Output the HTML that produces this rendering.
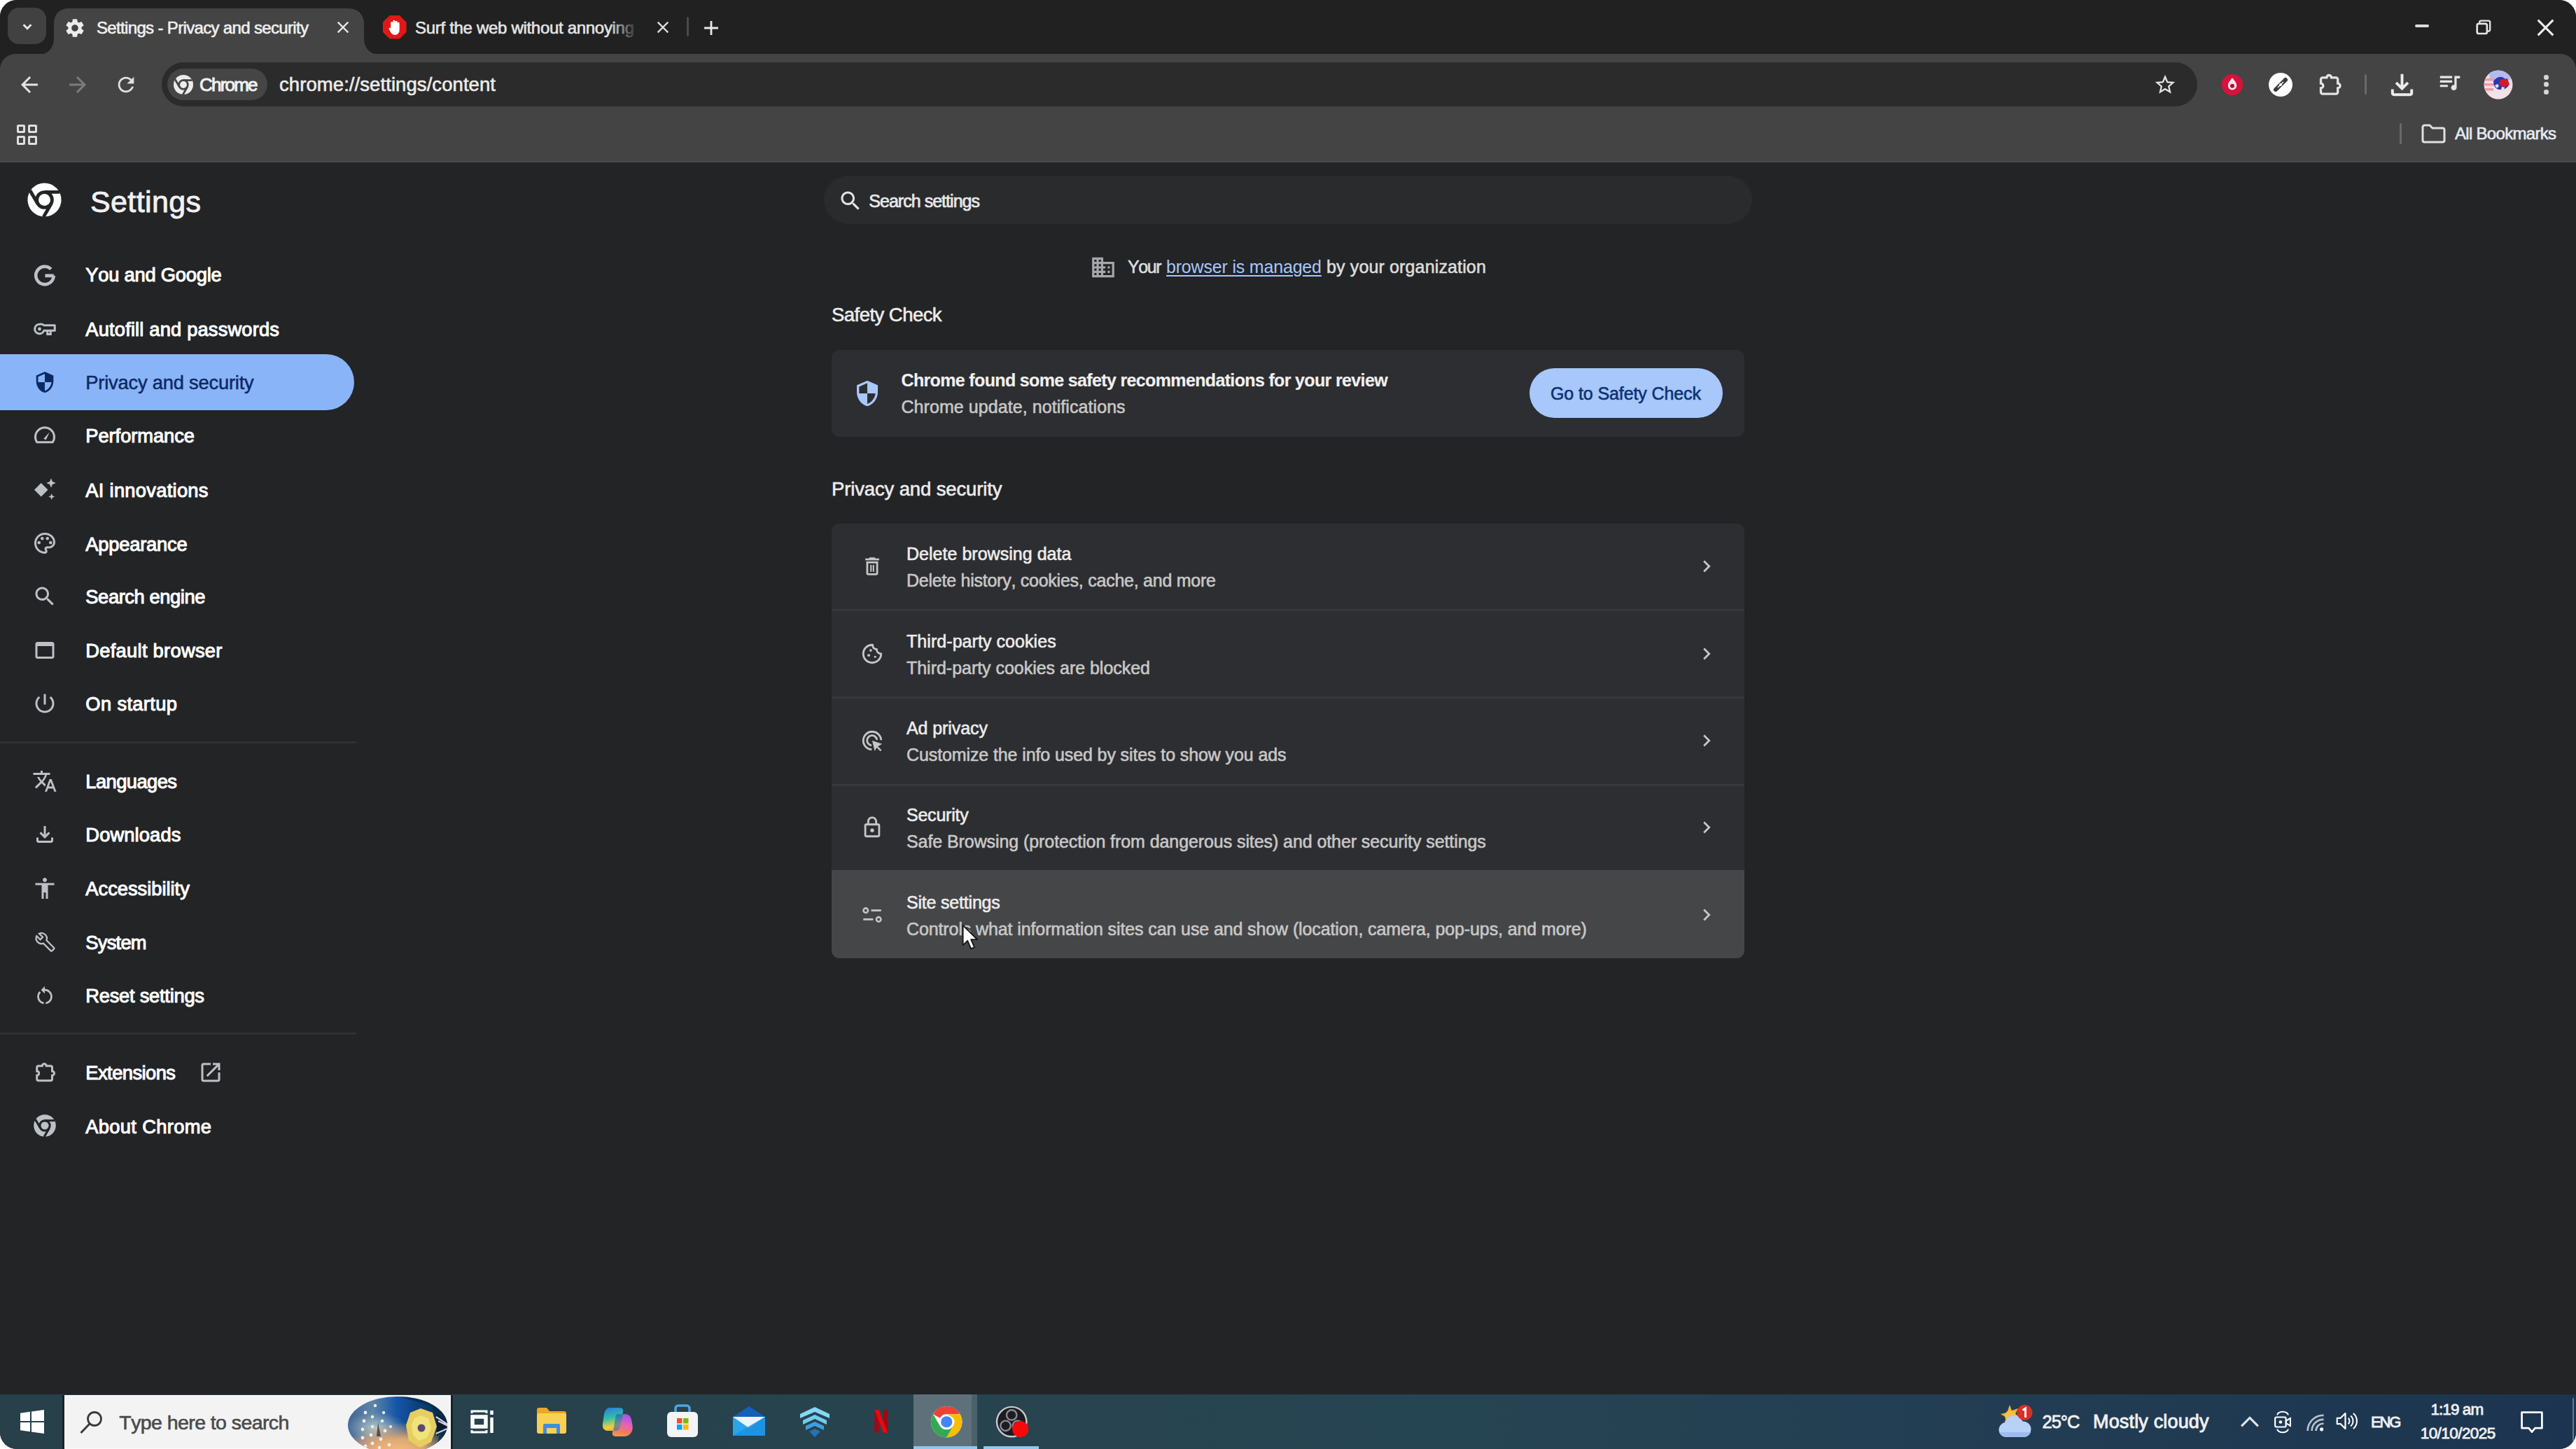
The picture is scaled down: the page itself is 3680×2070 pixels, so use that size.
<!DOCTYPE html>
<html><head><meta charset="utf-8"><title>Settings - Privacy and security</title>
<style>
html,body{margin:0;padding:0;background:#fff;}
body{width:3680px;height:2070px;overflow:hidden;position:relative;font-family:"Liberation Sans",sans-serif;}
#win{position:absolute;left:0;top:0;width:3680px;height:2070px;border-radius:24px;overflow:hidden;background:#222426;}
.b{position:absolute;display:block;}
.t{position:absolute;white-space:nowrap;line-height:1;font-kerning:none;}
</style></head><body><div id="win">
<div class="b" style="left:0px;top:0px;width:3680px;height:110px;background:#212121;border-radius:0;"></div>
<div class="b" style="left:0px;top:77px;width:3680px;height:155px;background:#444444;border-radius:22px 22px 0 0;"></div>
<div class="b" style="left:0px;top:230px;width:3680px;height:2px;background:#4a4b4d;border-radius:0;"></div>
<div class="b" style="left:11px;top:11px;width:55px;height:52px;background:#414141;border-radius:16px;"></div>
<svg class="b" style="left:25.5px;top:25.0px;" width="26" height="26" viewBox="0 0 24 24"><path d="M7 9.5l5 5 5-5" fill="none" stroke="#e8e8e8" stroke-width="2.6"/></svg>
<svg class="b" style="left:53px;top:11.500px" width="492" height="66.500" viewBox="0 0 492 66" preserveAspectRatio="none"><path d="M0 66 C14 66 24 58 24 42 L24 22 C24 8 32 0 46 0 L444 0 C458 0 467 8 467 22 L467 42 C467 58 477 66 492 66 Z" fill="#444444"/></svg>
<svg class="b" style="left:91.0px;top:24.0px;" width="32" height="32" viewBox="0 0 24 24"><path d="M19.14 12.94c.04-.3.06-.61.06-.94 0-.32-.02-.64-.07-.94l2.03-1.58c.18-.14.23-.41.12-.61l-1.92-3.32c-.12-.22-.37-.29-.59-.22l-2.39.96c-.5-.38-1.03-.7-1.62-.94l-.36-2.54c-.04-.24-.24-.41-.48-.41h-3.84c-.24 0-.43.17-.47.41l-.36 2.54c-.59.24-1.13.57-1.62.94l-2.39-.96c-.22-.08-.47 0-.59.22L2.74 8.87c-.12.21-.08.47.12.61l2.03 1.58c-.05.3-.09.63-.09.94s.02.64.07.94l-2.03 1.58c-.18.14-.23.41-.12.61l1.92 3.32c.12.22.37.29.59.22l2.39-.96c.5.38 1.03.7 1.62.94l.36 2.54c.05.24.24.41.48.41h3.84c.24 0 .44-.17.47-.41l.36-2.54c.59-.24 1.13-.56 1.62-.94l2.39.96c.22.08.47 0 .59-.22l1.92-3.32c.12-.22.07-.47-.12-.61l-2.01-1.58zM12 15.6c-1.98 0-3.6-1.62-3.6-3.6s1.62-3.6 3.6-3.6 3.6 1.62 3.6 3.6-1.62 3.6-3.6 3.6z" fill="#ececec"/></svg>
<div class="t " style="left:138.0px;top:27.9px;font-size:24px;font-weight:400;color:#f0f0f0;letter-spacing:-0.660px;-webkit-text-stroke:0.6px;">Settings - Privacy and security</div>
<svg class="b" style="left:476.0px;top:25.0px;" width="28" height="28" viewBox="0 0 24 24"><path d="M19 6.41L17.59 5 12 10.59 6.41 5 5 6.41 10.59 12 5 17.59 6.41 19 12 13.41 17.59 19 19 17.59 13.41 12z" fill="#e6e6e6"/></svg>
<svg class="b" style="left:545.800px;top:21px" width="35.500" height="35.500" viewBox="0 0 38 38"><polygon points="11.5,1 26.5,1 37,11.5 37,26.5 26.5,37 11.5,37 1,26.5 1,11.5" fill="#e21818"/><path d="M13 21 V12.5 a1.7 1.7 0 0 1 3.4 0 V10 a1.7 1.7 0 0 1 3.4 0 V11 a1.7 1.7 0 0 1 3.4 0 V13 a1.6 1.6 0 0 1 3.2 0 V23 c0 5 -3 8 -7 8 c-3.5 0 -5.5 -2 -7.5 -6 l-2 -4 c1 -1.5 2.6 -1.2 3.6 0 Z" fill="#fff"/></svg>
<div class="t " style="left:593.0px;top:27.9px;font-size:24px;font-weight:400;color:#e4e4e4;letter-spacing:-0.305px;-webkit-text-stroke:0.6px;">Surf the web without annoying</div>
<div class="b" style="left:870px;top:20px;width:42px;height:40px;background:linear-gradient(90deg,rgba(33,33,33,0),#212121);border-radius:0;"></div>
<svg class="b" style="left:933.0px;top:25.0px;" width="28" height="28" viewBox="0 0 24 24"><path d="M19 6.41L17.59 5 12 10.59 6.41 5 5 6.41 10.59 12 5 17.59 6.41 19 12 13.41 17.59 19 19 17.59 13.41 12z" fill="#dcdcdc"/></svg>
<div class="b" style="left:981px;top:24px;width:3px;height:28px;background:#4a4a4a;border-radius:2px;"></div>
<svg class="b" style="left:999.0px;top:22.5px;" width="34" height="34" viewBox="0 0 24 24"><path d="M19 13h-6v6h-2v-6H5v-2h6V5h2v6h6v2z" fill="#e8e8e8"/></svg>
<div class="b" style="left:3450px;top:35px;width:20px;height:3.5px;background:#dcdcdc;border-radius:2px;"></div>
<svg class="b" style="left:3535.500px;top:27.500px" width="23.500" height="22" viewBox="0 0 28 28"><path d="M7 7 V4.5 a2.5 2.5 0 0 1 2.5 -2.5 H23.5 a2.500 2.500 0 0 1 2.500 2.500 V18.500 a2.500 2.500 0 0 1 -2.500 2.500 H21" fill="none" stroke="#e4e4e4" stroke-width="3"/><rect x="2.5" y="7.500" width="18" height="18" rx="3" fill="none" stroke="#e4e4e4" stroke-width="3.400"/></svg>
<svg class="b" style="left:3622.5px;top:25.5px;" width="27" height="27" viewBox="0 0 30 30"><path d="M3 3 L27 27 M27 3 L3 27" stroke="#ececec" stroke-width="3.400" fill="none"/></svg>
<svg class="b" style="left:24.0px;top:103.0px;" width="36" height="36" viewBox="0 0 24 24"><path d="M20 11H7.83l5.59-5.59L12 4l-8 8 8 8 1.41-1.410L7.830 13H20v-2z" fill="#e4e4e4"/></svg>
<svg class="b" style="left:92.5px;top:103.0px;" width="36" height="36" viewBox="0 0 24 24"><path d="M12 4l-1.410 1.410L16.170 11H4v2h12.170l-5.580 5.590L12 20l8-8z" fill="#7c7c7c"/></svg>
<svg class="b" style="left:163.0px;top:104.0px;" width="34" height="34" viewBox="0 0 24 24"><path d="M17.650 6.350C16.200 4.900 14.210 4 12 4c-4.420 0-7.990 3.580-7.990 8s3.570 8 7.990 8c3.730 0 6.840-2.550 7.730-6h-2.080c-.82 2.330-3.040 4-5.650 4-3.310 0-6-2.690-6-6s2.690-6 6-6c1.660 0 3.140.690 4.220 1.780L13 11h7V4l-2.350 2.350z" fill="#e0e0e0"/></svg>
<div class="b" style="left:230.5px;top:88.5px;width:2908.5px;height:63.0px;background:#2b2b2b;border-radius:32px;"></div>
<div class="b" style="left:239px;top:98px;width:143px;height:45px;background:#454545;border-radius:23px;"></div>
<svg class="b" style="left:246.0px;top:105.0px;" width="32" height="32" viewBox="0 0 24 24"><circle cx="12" cy="12" r="10.500" fill="#ececec"/><circle cx="12" cy="12" r="5.800" fill="#454545"/><circle cx="12" cy="12" r="3.700" fill="#ececec"/><path d="M12 7.150H21.500 M7.800 14.430L3.050 6.200 M16.200 14.430L11.450 22.650" stroke="#454545" stroke-width="2.100" fill="none"/></svg>
<div class="t " style="left:285.0px;top:107.9px;font-size:26px;font-weight:400;color:#f0f0f0;letter-spacing:-1.797px;-webkit-text-stroke:1.0px;">Chrome</div>
<div class="t " style="left:399.0px;top:107.2px;font-size:27.5px;font-weight:400;color:#ececec;letter-spacing:0.073px;-webkit-text-stroke:0.6px;">chrome://settings/content</div>
<svg class="b" style="left:3076.4px;top:104.0px;" width="34" height="34" viewBox="0 0 24 24"><path d="M22 9.240l-7.190-.62L12 2 9.190 8.630 2 9.240l5.460 4.730L5.820 21 12 17.270 18.180 21l-1.630-7.030L22 9.240zM12 15.400l-3.760 2.270 1-4.280-3.320-2.880 4.380-.38L12 6.100l1.710 4.040 4.380.380-3.320 2.880 1 4.280L12 15.400z" fill="#e6e6e6"/></svg>
<svg class="b" style="left:3173px;top:104.500px" width="32" height="32" viewBox="0 0 36 36"><circle cx="18" cy="18" r="17" fill="#d9113c"/><path d="M18 7 c3 4 7 7.500 7 12.500 a7 7 0 0 1 -14 0 c0-5 4-8.500 7-12.500z" fill="#fbe4ea"/><circle cx="18" cy="20" r="3.300" fill="#b00c30"/></svg>
<svg class="b" style="left:3240px;top:103px" width="36" height="36" viewBox="0 0 36 36"><circle cx="18" cy="18" r="17" fill="#fff"/><path d="M11 25 L25 11" stroke="#3a3a3a" stroke-width="6" stroke-linecap="round"/><path d="M14 22 L22 14" stroke="#fff" stroke-width="1.500"/><circle cx="18" cy="18" r="2" fill="#fff"/></svg>
<svg class="b" style="left:3308.0px;top:99.5px;" width="40" height="40" viewBox="0 0 24 24"><path d="M9.500 6.500 a2 2 0 0 1 4 0 H17.500 a1.500 1.500 0 0 1 1.500 1.500 V11.500 a2 2 0 0 1 0 4 V19 a1.500 1.500 0 0 1 -1.500 1.500 H6 a1.500 1.500 0 0 1 -1.500 -1.500 V15.500 a2 2 0 0 0 0 -4 V8 A1.500 1.500 0 0 1 6 6.500 Z" fill="none" stroke="#e4e4e4" stroke-width="2"/></svg>
<div class="b" style="left:3377.5px;top:106px;width:3.0px;height:29px;background:#6a6a6a;border-radius:2px;"></div>
<svg class="b" style="left:3407.5px;top:97.5px;" width="47" height="47" viewBox="0 0 24 24"><path d="M12 16l-5-5 1.400-1.450 2.600 2.600V4h2v8.150l2.600-2.600L17 11l-5 5zm-6 4c-.55 0-1.020-.2-1.410-.59C4.200 19.020 4 18.550 4 18v-3h2v3h12v-3h2v3c0 .55-.2 1.020-.59 1.410-.39.390-.86.590-1.410.590H6z" fill="#ececec"/></svg>
<svg class="b" style="left:3480.6px;top:99.0px;" width="38" height="38" viewBox="0 0 24 24"><path d="M3 6h11v2H3z M3 10h11v2H3z M3 14h7v2H3z" fill="#e6e6e6"/><path d="M16 6 h5 v2.200 h-3 V16.500 a2.500 2.500 0 1 1 -2 -2.450 Z" fill="#e6e6e6"/></svg>
<svg class="b" style="left:3547.700px;top:100px" width="42" height="42" viewBox="0 0 42 42"><defs><clipPath id="av"><circle cx="21" cy="21" r="20.500"/></clipPath></defs><g clip-path="url(#av)"><rect width="42" height="42" fill="#f1dfe4"/><ellipse cx="24" cy="8" rx="16" ry="11" fill="#b4bcee"/><path d="M0 12 h16 v3.500 h-16z M0 19 h15 v3.500 h-15z M0 26 h14 v3.500 h-14z" fill="#ee9aa6"/><path d="M14 16 q8 -10 16 -4 l6 10 q-6 8 -14 6 q-8 -2 -8 -12z" fill="#2b38b2"/><path d="M24 14 l10 -2 3 9 -8 4 -7 -5z" fill="#d21a2c"/><path d="M16 22 l4 -2 2 3 -3 3z M26 24 l4 1 -1 4 -4 -1z" fill="#e8e0f4"/><ellipse cx="24" cy="36" rx="16" ry="8" fill="#f3e3e6"/></g></svg>
<div class="b" style="left:3634.200px;top:107.25px;width:6.500px;height:6.500px;border-radius:50%;background:#d6d6d6"></div>
<div class="b" style="left:3634.200px;top:117.25px;width:6.500px;height:6.500px;border-radius:50%;background:#d6d6d6"></div>
<div class="b" style="left:3634.200px;top:128.25px;width:6.500px;height:6.500px;border-radius:50%;background:#d6d6d6"></div>
<div class="b" style="left:23.5px;top:177.5px;width:12.500px;height:12.500px;box-sizing:border-box;border:3px solid #dedede;border-radius:2px"></div>
<div class="b" style="left:40px;top:177.5px;width:12.500px;height:12.500px;box-sizing:border-box;border:3px solid #dedede;border-radius:2px"></div>
<div class="b" style="left:23.5px;top:194px;width:12.500px;height:12.500px;box-sizing:border-box;border:3px solid #dedede;border-radius:2px"></div>
<div class="b" style="left:40px;top:194px;width:12.500px;height:12.500px;box-sizing:border-box;border:3px solid #dedede;border-radius:2px"></div>
<div class="b" style="left:3427.5px;top:176px;width:3.0px;height:30px;background:#6a6a6a;border-radius:2px;"></div>
<svg class="b" style="left:3458px;top:176px" width="37" height="30" viewBox="0 0 37 30"><path d="M3 5.500 a2.500 2.500 0 0 1 2.500 -2.500 H13 l4 4 H31.500 a2.500 2.500 0 0 1 2.500 2.500 V24.500 a2.500 2.500 0 0 1 -2.500 2.500 H5.500 a2.500 2.500 0 0 1 -2.500 -2.500 Z" fill="none" stroke="#e0e0e0" stroke-width="3"/></svg>
<div class="t " style="left:3507.0px;top:179.4px;font-size:24px;font-weight:400;color:#e6ebf5;letter-spacing:-0.698px;-webkit-text-stroke:0.6px;">All Bookmarks</div>
<svg class="b" style="left:35.9px;top:258.0px;" width="55" height="55" viewBox="0 0 24 24"><circle cx="12" cy="12" r="10.500" fill="#ffffff"/><circle cx="12" cy="12" r="5.800" fill="#222426"/><circle cx="12" cy="12" r="3.700" fill="#ffffff"/><path d="M12 7.150H21.500 M7.800 14.430L3.050 6.200 M16.200 14.430L11.450 22.650" stroke="#222426" stroke-width="2.100" fill="none"/></svg>
<div class="t " style="left:129.0px;top:266.9px;font-size:43px;font-weight:400;color:#f1f1f1;letter-spacing:0.375px;-webkit-text-stroke:0.9px;">Settings</div>
<div class="b" style="left:0px;top:506px;width:506px;height:80px;background:#8ab4f8;border-radius:0 40px 40px 0;"></div>
<div class="t " style="left:122.3px;top:379.3px;font-size:27.3px;font-weight:400;color:#ffffff;letter-spacing:-0.216px;-webkit-text-stroke:1.05px;">You and Google</div>
<svg class="b" style="left:45.7px;top:374.0px;" width="36" height="36" viewBox="0 0 24 24"><path d="M20.500 12.200 H12.300 M20.500 12.200 A8.500 8.500 0 1 1 17.900 5.900" fill="none" stroke="#bdc1c6" stroke-width="3.100" transform="translate(0 1)"/></svg>
<div class="t " style="left:122.3px;top:457.0px;font-size:27.3px;font-weight:400;color:#ffffff;letter-spacing:0.170px;-webkit-text-stroke:1.05px;">Autofill and passwords</div>
<svg class="b" style="left:45.7px;top:451.7px;" width="36" height="36" viewBox="0 0 24 24"><path d="M7 8.500 a4.500 4.500 0 1 0 4.200 6 H21.500 V9.500 H11.200 A4.500 4.500 0 0 0 7 8.500 Z" fill="none" stroke="#bdc1c6" stroke-width="2" stroke-linejoin="round" transform="translate(0 -1)"/><circle cx="7" cy="12" r="1.600" fill="#bdc1c6"/><path d="M17.500 13.500 v3.500 h-3 v-3.500" fill="none" stroke="#bdc1c6" stroke-width="2"/></svg>
<div class="t " style="left:122.3px;top:533.1px;font-size:27.3px;font-weight:400;color:#0b2a63;letter-spacing:-0.203px;-webkit-text-stroke:0.5px;">Privacy and security</div>
<svg class="b" style="left:45.7px;top:527.8px;" width="36" height="36" viewBox="0 0 24 24"><path d="M12 1L3 5v6c0 5.550 3.840 10.740 9 12 5.160-1.260 9-6.450 9-12V5l-9-4zm0 10.990h7c-.53 4.120-3.280 7.790-7 8.940V12H5V6.300l7-3.110v8.800z" fill="#0b2a63" transform="translate(1.100 1.100) scale(0.910)"/></svg>
<div class="t " style="left:122.3px;top:609.2px;font-size:27.3px;font-weight:400;color:#ffffff;letter-spacing:-0.057px;-webkit-text-stroke:1.05px;">Performance</div>
<svg class="b" style="left:45.7px;top:603.9px;" width="36" height="36" viewBox="0 0 24 24"><path d="M4.500 18.500 A9 9 0 1 1 19.500 18.500 Z" fill="none" stroke="#bdc1c6" stroke-width="2" stroke-linejoin="round"/><path d="M10.800 15.200 L16.500 9 L13.200 16.200 Z" fill="#bdc1c6"/></svg>
<div class="t " style="left:122.3px;top:686.7px;font-size:27.3px;font-weight:400;color:#ffffff;letter-spacing:0.286px;-webkit-text-stroke:1.05px;">AI innovations</div>
<svg class="b" style="left:45.7px;top:681.4px;" width="36" height="36" viewBox="0 0 24 24"><path d="M8.500 6 L15 12.500 L8.500 19 L2 12.500 Z" fill="#bdc1c6"/><path d="M18 1.500 l1.300 3.200 3.200 1.300 -3.200 1.300 -1.300 3.200 -1.300 -3.200 -3.200 -1.300 3.200 -1.300z M18.500 16 l.9 2.100 2.100.9 -2.100.9 -.9 2.100 -.9 -2.100 -2.100 -.9 2.100 -.9z" fill="#bdc1c6"/></svg>
<div class="t " style="left:122.3px;top:763.7px;font-size:27.3px;font-weight:400;color:#ffffff;letter-spacing:-0.202px;-webkit-text-stroke:1.05px;">Appearance</div>
<svg class="b" style="left:45.7px;top:758.4px;" width="36" height="36" viewBox="0 0 24 24"><path d="M12 22C6.490 22 2 17.510 2 12S6.490 2 12 2s10 4.040 10 9c0 3.310-2.690 6-6 6h-1.770c-.28 0-.5.220-.5.500 0 .12.050.23.130.33.410.47.640 1.060.640 1.670A2.500 2.500 0 0 1 12 22zm0-18c-4.410 0-8 3.590-8 8s3.590 8 8 8c.28 0 .5-.22.5-.5a.54.540 0 0 0-.14-.35c-.41-.46-.63-1.050-.63-1.650a2.500 2.500 0 0 1 2.500-2.500H16c2.210 0 4-1.790 4-4 0-3.860-3.590-7-8-7z" fill="#bdc1c6"/><circle cx="6.500" cy="11.500" r="1.500" fill="#bdc1c6"/><circle cx="9.500" cy="7.500" r="1.500" fill="#bdc1c6"/><circle cx="14.500" cy="7.500" r="1.500" fill="#bdc1c6"/><circle cx="17.500" cy="11.500" r="1.500" fill="#bdc1c6"/></svg>
<div class="t " style="left:122.3px;top:839.3px;font-size:27.3px;font-weight:400;color:#ffffff;letter-spacing:-0.404px;-webkit-text-stroke:1.05px;">Search engine</div>
<svg class="b" style="left:45.7px;top:834.0px;" width="36" height="36" viewBox="0 0 24 24"><path d="M15.500 14h-.79l-.28-.27C15.410 12.590 16 11.110 16 9.500 16 5.910 13.090 3 9.500 3S3 5.910 3 9.500 5.910 16 9.500 16c1.610 0 3.090-.59 4.230-1.570l.27.280v.790l5 4.990L20.490 19l-4.990-5zm-6 0C7.010 14 5 11.990 5 9.500S7.010 5 9.500 5 14 7.010 14 9.500 11.990 14 9.500 14z" fill="#bdc1c6"/></svg>
<div class="t " style="left:122.3px;top:916.3px;font-size:27.3px;font-weight:400;color:#ffffff;letter-spacing:0.281px;-webkit-text-stroke:1.05px;">Default browser</div>
<svg class="b" style="left:45.7px;top:911.0px;" width="36" height="36" viewBox="0 0 24 24"><path d="M19 4H5c-1.110 0-2 .9-2 2v12c0 1.100.89 2 2 2h14c1.100 0 2-.9 2-2V6c0-1.100-.89-2-2-2zm0 14H5V8h14v10z" fill="#bdc1c6"/></svg>
<div class="t " style="left:122.3px;top:992.3px;font-size:27.3px;font-weight:400;color:#ffffff;letter-spacing:0.361px;-webkit-text-stroke:1.05px;">On startup</div>
<svg class="b" style="left:45.7px;top:987.0px;" width="36" height="36" viewBox="0 0 24 24"><path d="M13 3h-2v10h2V3zm4.830 2.170l-1.420 1.420C17.990 7.860 19 9.810 19 12c0 3.870-3.130 7-7 7s-7-3.130-7-7c0-2.190 1.010-4.140 2.580-5.420L6.170 5.170C4.230 6.820 3 9.260 3 12c0 4.970 4.030 9 9 9s9-4.030 9-9c0-2.740-1.230-5.180-3.170-6.830z" fill="#bdc1c6"/></svg>
<div class="t " style="left:122.3px;top:1103.1px;font-size:27.3px;font-weight:400;color:#ffffff;letter-spacing:-0.551px;-webkit-text-stroke:1.05px;">Languages</div>
<svg class="b" style="left:45.7px;top:1097.8px;" width="36" height="36" viewBox="0 0 24 24"><path d="M12.870 15.070l-2.540-2.510.03-.03c1.740-1.940 2.980-4.170 3.710-6.530H17V4h-7V2H8v2H1v1.990h11.170C11.500 7.920 10.440 9.750 9 11.350 8.070 10.320 7.300 9.190 6.690 8h-2c.73 1.630 1.730 3.170 2.980 4.560l-5.090 5.020L4 19l5-5 3.110 3.110.76-2.040zM18.500 10h-2L12 22h2l1.120-3h4.750L21 22h2l-4.500-12zm-2.620 7l1.620-4.330L19.120 17h-3.240z" fill="#bdc1c6"/></svg>
<div class="t " style="left:122.3px;top:1179.2px;font-size:27.3px;font-weight:400;color:#ffffff;letter-spacing:0.132px;-webkit-text-stroke:1.05px;">Downloads</div>
<svg class="b" style="left:45.7px;top:1173.9px;" width="36" height="36" viewBox="0 0 24 24"><path d="M12 16l-5-5 1.400-1.450 2.600 2.600V4h2v8.150l2.600-2.600L17 11l-5 5zm-6 4c-.55 0-1.020-.2-1.410-.59C4.200 19.020 4 18.550 4 18v-3h2v3h12v-3h2v3c0 .55-.2 1.020-.59 1.410-.39.390-.86.590-1.410.590H6z" fill="#bdc1c6"/></svg>
<div class="t " style="left:122.3px;top:1256.2px;font-size:27.3px;font-weight:400;color:#ffffff;letter-spacing:-0.013px;-webkit-text-stroke:1.05px;">Accessibility</div>
<svg class="b" style="left:45.7px;top:1250.9px;" width="36" height="36" viewBox="0 0 24 24"><path d="M12 2c1.100 0 2 .9 2 2s-.9 2-2 2-2-.9-2-2 .9-2 2-2zm9 7h-6v13h-2v-6h-2v6H9V9H3V7h18v2z" fill="#bdc1c6"/></svg>
<div class="t " style="left:122.3px;top:1332.9px;font-size:27.3px;font-weight:400;color:#ffffff;letter-spacing:-0.743px;-webkit-text-stroke:1.05px;">System</div>
<svg class="b" style="left:45.7px;top:1327.6px;" width="36" height="36" viewBox="0 0 24 24"><path d="M22.700 19l-9.100-9.100c.9-2.300.4-5-1.500-6.900-2-2-5-2.400-7.400-1.300L9 6 6 9 1.600 4.700C.4 7.100.9 10.100 2.900 12.100c1.900 1.900 4.600 2.400 6.900 1.500l9.100 9.100c.4.400 1 .400 1.400 0l2.300-2.300c.5-.4.5-1.100.1-1.400z" fill="none" stroke="#bdc1c6" stroke-width="2" transform="translate(3 2.500) scale(0.780)"/></svg>
<div class="t " style="left:122.3px;top:1409.0px;font-size:27.3px;font-weight:400;color:#ffffff;letter-spacing:-0.251px;-webkit-text-stroke:1.05px;">Reset settings</div>
<svg class="b" style="left:45.7px;top:1403.7px;" width="36" height="36" viewBox="0 0 24 24"><path d="M12 5V2L8 6l4 4V7c3.310 0 6 2.690 6 6 0 2.970-2.170 5.430-5 5.910v2.020c3.950-.49 7-3.850 7-7.930 0-4.420-3.580-8-8-8zM6 13c0-1.650.67-3.150 1.760-4.240L6.340 7.340C4.900 8.790 4 10.790 4 13c0 4.080 3.050 7.440 7 7.930v-2.020c-2.830-.48-5-2.940-5-5.910z" fill="#bdc1c6" transform="translate(1.200 1.400) scale(0.900)"/></svg>
<div class="t " style="left:122.3px;top:1518.5px;font-size:27.3px;font-weight:400;color:#ffffff;letter-spacing:-0.537px;-webkit-text-stroke:1.05px;">Extensions</div>
<svg class="b" style="left:45.7px;top:1513.2px;" width="36" height="36" viewBox="0 0 24 24"><path d="M9.500 6.500 a2 2 0 0 1 4 0 H17.500 a1.500 1.500 0 0 1 1.500 1.500 V11.500 a2 2 0 0 1 0 4 V19 a1.500 1.500 0 0 1 -1.500 1.500 H6 a1.500 1.500 0 0 1 -1.500 -1.500 V15.500 a2 2 0 0 0 0 -4 V8 A1.500 1.500 0 0 1 6 6.500 Z" fill="none" stroke="#bdc1c6" stroke-width="2"/></svg>
<div class="t " style="left:122.3px;top:1595.6px;font-size:27.3px;font-weight:400;color:#ffffff;letter-spacing:0.326px;-webkit-text-stroke:1.05px;">About Chrome</div>
<svg class="b" style="left:45.7px;top:1590.3px;" width="36" height="36" viewBox="0 0 24 24"><circle cx="12" cy="12" r="10.500" fill="#bdc1c6"/><circle cx="12" cy="12" r="5.800" fill="#222426"/><circle cx="12" cy="12" r="3.700" fill="#bdc1c6"/><path d="M12 7.150H21.500 M7.800 14.430L3.050 6.200 M16.200 14.430L11.450 22.650" stroke="#222426" stroke-width="2.100" fill="none"/></svg>
<div class="b" style="left:0px;top:1059px;width:509px;height:3px;background:#303134;border-radius:0;"></div>
<div class="b" style="left:0px;top:1475px;width:509px;height:3px;background:#303134;border-radius:0;"></div>
<svg class="b" style="left:283.2px;top:1513.5px;" width="36" height="36" viewBox="0 0 24 24"><path d="M19 19H5V5h7V3H5c-1.110 0-2 .9-2 2v14c0 1.100.89 2 2 2h14c1.100 0 2-.9 2-2v-7h-2v7zM14 3v2h3.590l-9.830 9.830 1.410 1.410L19 6.410V10h2V3h-7z" fill="#bdc1c6"/></svg>
<div class="b" style="left:1177px;top:251px;width:1326px;height:69px;background:#2a2b2d;border-radius:35px;"></div>
<svg class="b" style="left:1196.5px;top:268.5px;" width="36" height="36" viewBox="0 0 24 24"><path d="M15.500 14h-.79l-.28-.27C15.410 12.590 16 11.110 16 9.500 16 5.910 13.090 3 9.500 3S3 5.910 3 9.500 5.910 16 9.500 16c1.610 0 3.090-.59 4.230-1.570l.27.280v.790l5 4.990L20.490 19l-4.990-5zm-6 0C7.010 14 5 11.990 5 9.500S7.010 5 9.500 5 14 7.010 14 9.500 11.990 14 9.500 14z" fill="#e3e3e3"/></svg>
<div class="t " style="left:1241.3px;top:274.9px;font-size:25px;font-weight:400;color:#e8e8e8;letter-spacing:-0.973px;-webkit-text-stroke:0.7px;">Search settings</div>
<svg class="b" style="left:1557.0px;top:362.5px;" width="38" height="38" viewBox="0 0 24 24"><path d="M12 7V3H2v18h20V7H12zM6 19H4v-2h2v2zm0-4H4v-2h2v2zm0-4H4V9h2v2zm0-4H4V5h2v2zm4 12H8v-2h2v2zm0-4H8v-2h2v2zm0-4H8V9h2v2zm0-4H8V5h2v2zm10 12h-8v-2h2v-2h-2v-2h2v-2h-2V9h8v10zm-2-8h-2v2h2v-2zm0 4h-2v2h2v-2z" fill="#a6a8ab"/></svg>
<div class="t " style="left:1610.9px;top:369.4px;font-size:25px;font-weight:400;color:#dcdcdc;letter-spacing:-1.404px;-webkit-text-stroke:0.6px;">Your</div>
<div class="t " style="left:1666.0px;top:369.4px;font-size:25px;font-weight:400;color:#a8c7fa;letter-spacing:-0.184px;text-decoration:underline;text-underline-offset:3px;text-decoration-thickness:2px-webkit-text-stroke:0.6px;">browser is managed</div>
<div class="t " style="left:1895.0px;top:369.4px;font-size:25px;font-weight:400;color:#dcdcdc;letter-spacing:0.140px;-webkit-text-stroke:0.6px;">by your organization</div>
<div class="t " style="left:1188.0px;top:436.2px;font-size:27.5px;font-weight:400;color:#ececec;letter-spacing:-0.542px;-webkit-text-stroke:0.6px;">Safety Check</div>
<div class="b" style="left:1188px;top:500px;width:1304px;height:124px;background:#2d2e31;border-radius:11px;"></div>
<svg class="b" style="left:1218.5px;top:541.5px;" width="40" height="40" viewBox="0 0 24 24"><path d="M12 1L3 5v6c0 5.550 3.840 10.740 9 12 5.160-1.260 9-6.450 9-12V5l-9-4zm0 10.990h7c-.53 4.120-3.280 7.790-7 8.940V12H5V6.300l7-3.110v8.800z" fill="#a8c7fa"/></svg>
<div class="t " style="left:1287.5px;top:531.0px;font-size:25px;font-weight:700;color:#f0f0f0;letter-spacing:-0.648px;-webkit-text-stroke:0.2px;">Chrome found some safety recommendations for your review</div>
<div class="t " style="left:1287.5px;top:569.4px;font-size:25px;font-weight:400;color:#c7c7c7;letter-spacing:0.069px;-webkit-text-stroke:0.6px;">Chrome update, notifications</div>
<div class="b" style="left:2185px;top:526px;width:276px;height:71px;background:#a8c7fa;border-radius:36px;"></div>
<div class="t " style="left:2215.0px;top:550.0px;font-size:25px;font-weight:400;color:#0b3275;letter-spacing:-0.105px;-webkit-text-stroke:0.6px;">Go to Safety Check</div>
<div class="t " style="left:1188.0px;top:685.2px;font-size:27.5px;font-weight:400;color:#ececec;letter-spacing:-0.136px;-webkit-text-stroke:0.6px;">Privacy and security</div>
<div class="b" style="left:1188px;top:748px;width:1304px;height:621px;background:#2d2e31;border-radius:11px;overflow:hidden"></div>
<div class="b" style="left:1188px;top:1243px;width:1304px;height:126px;background:#454648;border-radius:0 0 11px 11px;"></div>
<div class="b" style="left:1188px;top:870px;width:1304px;height:3px;background:#37383b;border-radius:0;"></div>
<div class="b" style="left:1188px;top:995px;width:1304px;height:3px;background:#37383b;border-radius:0;"></div>
<div class="b" style="left:1188px;top:1120px;width:1304px;height:3px;background:#37383b;border-radius:0;"></div>
<div class="t " style="left:1295.0px;top:778.7px;font-size:25px;font-weight:400;color:#ececec;letter-spacing:0.028px;-webkit-text-stroke:0.6px;">Delete browsing data</div>
<div class="t " style="left:1295.0px;top:816.7px;font-size:25px;font-weight:400;color:#c7c7c7;letter-spacing:-0.247px;-webkit-text-stroke:0.6px;">Delete history, cookies, cache, and more</div>
<svg class="b" style="left:1229.0px;top:791.8px;" width="34" height="34" viewBox="0 0 24 24"><path d="M16 9v10H8V9h8m-1.500-6h-5l-1 1H5v2h14V4h-3.500l-1-1zM18 7H6v12c0 1.100.9 2 2 2h8c1.100 0 2-.9 2-2V7z" fill="#c4c7c5"/><path d="M10 10.500h1.500v7H10z M12.500 10.500H14v7h-1.500z" fill="#c4c7c5"/></svg>
<svg class="b" style="left:2421.0px;top:791.8px;" width="34" height="34" viewBox="0 0 24 24"><path d="M10 6L8.590 7.410 13.170 12l-4.580 4.590L10 18l6-6z" fill="#c4c7c5"/></svg>
<div class="t " style="left:1295.0px;top:903.7px;font-size:25px;font-weight:400;color:#ececec;letter-spacing:0.062px;-webkit-text-stroke:0.6px;">Third-party cookies</div>
<div class="t " style="left:1295.0px;top:941.7px;font-size:25px;font-weight:400;color:#c7c7c7;letter-spacing:-0.026px;-webkit-text-stroke:0.6px;">Third-party cookies are blocked</div>
<svg class="b" style="left:1229.0px;top:916.8px;" width="34" height="34" viewBox="0 0 24 24"><path d="M21 12 a9 9 0 1 1 -8.500 -9 c-.3 2.500 1.500 4.500 4 4.300 c-.2 2.700 1.800 4.700 4.500 4.700z" fill="none" stroke="#c4c7c5" stroke-width="2" stroke-linejoin="round"/><circle cx="8.500" cy="13.500" r="1.400" fill="#c4c7c5"/><circle cx="10.500" cy="8.500" r="1.300" fill="#c4c7c5"/><circle cx="15" cy="15" r="1.100" fill="#c4c7c5"/></svg>
<svg class="b" style="left:2421.0px;top:916.8px;" width="34" height="34" viewBox="0 0 24 24"><path d="M10 6L8.590 7.410 13.170 12l-4.580 4.590L10 18l6-6z" fill="#c4c7c5"/></svg>
<div class="t " style="left:1295.0px;top:1028.3px;font-size:25px;font-weight:400;color:#ececec;letter-spacing:-0.091px;-webkit-text-stroke:0.6px;">Ad privacy</div>
<div class="t " style="left:1295.0px;top:1066.3px;font-size:25px;font-weight:400;color:#c7c7c7;letter-spacing:-0.107px;-webkit-text-stroke:0.6px;">Customize the info used by sites to show you ads</div>
<svg class="b" style="left:1229.0px;top:1041.4px;" width="34" height="34" viewBox="0 0 24 24"><path d="M11.500 21 A9 9 0 1 1 21 11.500" fill="none" stroke="#c4c7c5" stroke-width="2"/><path d="M11.300 16.800 A5 5 0 1 1 16.800 11.300" fill="none" stroke="#c4c7c5" stroke-width="2"/><path d="M12 12 L22 15.300 L17.800 17.800 L21.500 21.500 L20.200 22.800 L16.500 19.100 L14.500 22.500 Z" fill="#c4c7c5"/></svg>
<svg class="b" style="left:2421.0px;top:1041.4px;" width="34" height="34" viewBox="0 0 24 24"><path d="M10 6L8.590 7.410 13.170 12l-4.580 4.590L10 18l6-6z" fill="#c4c7c5"/></svg>
<div class="t " style="left:1295.0px;top:1152.2px;font-size:25px;font-weight:400;color:#ececec;letter-spacing:-0.230px;-webkit-text-stroke:0.6px;">Security</div>
<div class="t " style="left:1295.0px;top:1190.2px;font-size:25px;font-weight:400;color:#c7c7c7;letter-spacing:-0.080px;-webkit-text-stroke:0.6px;">Safe Browsing (protection from dangerous sites) and other security settings</div>
<svg class="b" style="left:1229.0px;top:1165.3px;" width="34" height="34" viewBox="0 0 24 24"><path d="M18 8h-1V6c0-2.760-2.240-5-5-5S7 3.240 7 6v2H6c-1.100 0-2 .9-2 2v10c0 1.100.9 2 2 2h12c1.100 0 2-.9 2-2V10c0-1.100-.9-2-2-2zM9 6c0-1.660 1.340-3 3-3s3 1.340 3 3v2H9V6zm9 14H6V10h12v10zm-6-3c1.100 0 2-.9 2-2s-.9-2-2-2-2 .9-2 2 .9 2 2 2z" fill="#c4c7c5"/></svg>
<svg class="b" style="left:2421.0px;top:1165.3px;" width="34" height="34" viewBox="0 0 24 24"><path d="M10 6L8.590 7.410 13.170 12l-4.580 4.590L10 18l6-6z" fill="#c4c7c5"/></svg>
<div class="t " style="left:1295.0px;top:1277.2px;font-size:25px;font-weight:400;color:#ececec;letter-spacing:-0.199px;-webkit-text-stroke:0.6px;">Site settings</div>
<div class="t " style="left:1295.0px;top:1315.2px;font-size:25px;font-weight:400;color:#c7c7c7;letter-spacing:-0.109px;-webkit-text-stroke:0.6px;">Controls what information sites can use and show (location, camera, pop-ups, and more)</div>
<svg class="b" style="left:1229.0px;top:1290.3px;" width="34" height="34" viewBox="0 0 24 24"><circle cx="5.500" cy="7.500" r="2.300" fill="none" stroke="#c4c7c5" stroke-width="1.800"/><path d="M11 7.500H21" stroke="#c4c7c5" stroke-width="2"/><circle cx="18.500" cy="16.500" r="2.300" fill="none" stroke="#c4c7c5" stroke-width="1.800"/><path d="M3 16.500H13" stroke="#c4c7c5" stroke-width="2"/></svg>
<svg class="b" style="left:2421.0px;top:1290.3px;" width="34" height="34" viewBox="0 0 24 24"><path d="M10 6L8.590 7.410 13.170 12l-4.580 4.590L10 18l6-6z" fill="#c4c7c5"/></svg>
<svg class="b" style="left:1372.500px;top:1319.500px" width="26.500" height="39" viewBox="0 0 30 44"><path d="M3 2 L3 34 L10.500 27 L16 40 L21.500 37.500 L16 25 L26 25 Z" fill="#fff" stroke="#111" stroke-width="2" stroke-linejoin="round"/></svg>
<div class="b" style="left:0px;top:1992px;width:3680px;height:78px;background:linear-gradient(90deg,#27404a 0%,#27434e 35%,#264552 55%,#223d53 78%,#1c3450 100%);border-radius:0;"></div>
<svg class="b" style="left:29px;top:2014px" width="34" height="34" viewBox="0 0 34 34"><path d="M0 4.700 L14 2.800 V16 H0Z M16 2.500 L34 0 V16 H16Z M0 18 H14 V31.200 L0 29.300Z M16 18 H34 V34 L16 31.500Z" fill="#fff"/></svg>
<div class="b" style="left:89px;top:1993px;width:557.5px;height:77px;background:#16242b;border-radius:0;"></div>
<div class="b" style="left:91.5px;top:1993px;width:552.5px;height:77px;background:#f3f3f3;border-radius:0;border:2px solid #f8f8f8;box-sizing:border-box"></div>
<svg class="b" style="left:113px;top:2014px" width="36" height="36" viewBox="0 0 36 36"><circle cx="22" cy="13" r="9.500" fill="none" stroke="#3a3a3a" stroke-width="2.800"/><path d="M15 20 L2.500 33" stroke="#3a3a3a" stroke-width="3"/></svg>
<div class="t " style="left:170.3px;top:2017.7px;font-size:28.5px;font-weight:400;color:#4a4a4a;letter-spacing:-0.576px;-webkit-text-stroke:0.6px;">Type here to search</div>
<svg class="b" style="left:496px;top:1994px" width="146" height="76" viewBox="0 0 146 76"><defs><linearGradient id="sg1" x1="0" y1="0" x2="1" y2="0"><stop offset="0" stop-color="#3f6496"/><stop offset="0.250" stop-color="#5e85a8"/><stop offset="0.480" stop-color="#1556a8"/><stop offset="0.700" stop-color="#0c3f7c"/><stop offset="1" stop-color="#052a40"/></linearGradient><radialGradient id="sg2" cx="0.520" cy="1.050" r="0.550"><stop offset="0" stop-color="#f6bd76"/><stop offset="0.450" stop-color="#f0b070" stop-opacity="0.900"/><stop offset="1" stop-color="#f0b070" stop-opacity="0"/></radialGradient><radialGradient id="sg3" cx="0.280" cy="0.600" r="0.300"><stop offset="0" stop-color="#c9d4cc" stop-opacity="0.850"/><stop offset="1" stop-color="#9fb4c0" stop-opacity="0"/></radialGradient><radialGradient id="sg4" cx="0.250" cy="1.050" r="0.350"><stop offset="0" stop-color="#c48a8a"/><stop offset="1" stop-color="#c48a8a" stop-opacity="0"/></radialGradient><clipPath id="sgc"><ellipse cx="72" cy="42" rx="71" ry="41"/></clipPath></defs><g clip-path="url(#sgc)"><rect width="146" height="76" fill="url(#sg1)"/><rect width="146" height="76" fill="url(#sg3)"/><rect width="146" height="76" fill="url(#sg4)"/><rect width="146" height="76" fill="url(#sg2)"/><path d="M70 0 H146 V76 H128 L134 40 L120 14 Z" fill="#062c44" opacity="0.700"/><path d="M128 26 L146 40 L128 58 Z" fill="#0a1c2c"/><path d="M127 30 L145 42 M127 54 L145 46 M130 36 L146 44" stroke="#d4d0ea" stroke-width="2.200" fill="none"/><polygon points="105,18 122,24 128,44 120,66 104,74 88,64 84,42 90,24" fill="#e6cf5e"/><polygon points="104,28 116,32 120,46 114,60 102,64 94,56 92,42 96,32" fill="#f1e27c"/><circle cx="106" cy="46" r="5.500" fill="#5b4a70"/><g fill="#eef0e8"><circle cx="26" cy="24" r="2.400"/><circle cx="40" cy="14" r="2.200"/><circle cx="24" cy="36" r="2.400"/><circle cx="22" cy="48" r="2.400"/><circle cx="22" cy="60" r="2.400"/><circle cx="26" cy="72" r="2.400"/><circle cx="36" cy="30" r="2.200"/><circle cx="36" cy="44" r="2.200"/><circle cx="34" cy="56" r="2.400"/><circle cx="36" cy="68" r="2.400"/><circle cx="52" cy="24" r="2.200"/><circle cx="50" cy="36" r="2.200"/><circle cx="54" cy="50" r="2.400"/><circle cx="48" cy="62" r="2.400"/><circle cx="60" cy="70" r="2.400"/><circle cx="62" cy="44" r="2"/><circle cx="46" cy="74" r="2.200"/></g><path d="M44 38 L48 58 L42 58 Z" fill="#2a2a30" opacity="0.700"/></g></svg>
<svg class="b" style="left:672px;top:2014px" width="35" height="34" viewBox="0 0 35 34"><path d="M2 5 V2 H23 V5 M2 29 V32 H23 V29" fill="none" stroke="#fff" stroke-width="3"/><rect x="3" y="10" width="19" height="14" fill="none" stroke="#fff" stroke-width="5.500"/><path d="M30.500 1 V7 M30.500 11 V33" stroke="#fff" stroke-width="4.500"/></svg>
<svg class="b" style="left:764px;top:2006px" width="48" height="48" viewBox="0 0 48 48"><path d="M3 8 a3 3 0 0 1 3-3 H17 l4 5 H42 a3 3 0 0 1 3 3 V16 H3Z" fill="#e9a825"/><rect x="3" y="13" width="42" height="29" rx="3" fill="#f9d053"/><path d="M12 42 V30 a2 2 0 0 1 2-2 H34 a2 2 0 0 1 2 2 V42Z" fill="#3b8fe0"/><rect x="17" y="34" width="14" height="8" fill="#f9d053"/></svg>
<svg class="b" style="left:858px;top:2008px" width="48" height="48" viewBox="0 0 48 48"><defs><linearGradient id="cpa" x1="0.300" y1="0" x2="0.500" y2="1"><stop offset="0" stop-color="#2a7fe0"/><stop offset="0.450" stop-color="#35c0a0"/><stop offset="0.800" stop-color="#e8d040"/><stop offset="1" stop-color="#f0b040"/></linearGradient><linearGradient id="cpb" x1="0.600" y1="0" x2="0.400" y2="1"><stop offset="0" stop-color="#9a58e8"/><stop offset="0.450" stop-color="#e860b8"/><stop offset="0.800" stop-color="#f47a5a"/><stop offset="1" stop-color="#f09a4a"/></linearGradient></defs><path d="M24 12 H34 c6 0 9 3 10 8 l1.500 8 c1.500 8 -3 16 -12 16 H22 c-4 0 -6 -2 -5 -6 l3 -20 c.5 -4 2 -6 4 -6Z" fill="url(#cpb)"/><path d="M13 3 H27 c4 0 6 2 5 6 l-4 21 c-.800 4 -3 6 -7 6 H11 c-6 0 -9 -4 -8 -10 l2 -14 C6 7 9 3 13 3Z" fill="url(#cpa)"/><path d="M24 12 h8 l-4 18 c-.800 4 -3 6 -7 6 h-3 l3 -18 c.5 -4 1 -6 3 -6Z" fill="#2450c0" opacity="0.550"/></svg>
<svg class="b" style="left:950px;top:2004px" width="50" height="52" viewBox="0 0 50 52"><path d="M15 14 V8 a4 4 0 0 1 4-4 H31 a4 4 0 0 1 4 4 V14" fill="none" stroke="#4ea5e0" stroke-width="3.500"/><rect x="3" y="13" width="44" height="36" rx="6" fill="#f4f4f6"/><rect x="17" y="22" width="7.500" height="7.500" fill="#f25022"/><rect x="26" y="22" width="7.500" height="7.500" fill="#7fba00"/><rect x="17" y="31" width="7.500" height="7.500" fill="#00a4ef"/><rect x="26" y="31" width="7.500" height="7.500" fill="#ffb900"/></svg>
<svg class="b" style="left:1044px;top:2006px" width="52" height="48" viewBox="0 0 52 48"><path d="M3 18 L26 3 L49 18 Z" fill="#1460b8"/><rect x="3" y="18" width="46" height="27" fill="#2aa4ea"/><path d="M3 18 L26 34 L49 18 Z" fill="#e8f6ff"/><path d="M3 45 L49 18 V45Z" fill="#1b8fe0" opacity="0.800"/></svg>
<svg class="b" style="left:1139px;top:2006px" width="50" height="50" viewBox="0 0 50 50"><path d="M25 4 L46 14 V20 L25 11 L4 20 V14Z" fill="#86d6f7"/><path d="M25 15 L42 23 V29 L25 21 L8 29 V23Z" fill="#74cbf2"/><path d="M25 25 L38 31 V37 L25 31 L12 37 V31Z" fill="#3f9fdc"/><path d="M25 35 L33 39 L25 47 L17 39Z" fill="#2273b8"/></svg>
<svg class="b" style="left:1246.500px;top:2012.500px" width="23.500" height="34.500" viewBox="0 0 28 44"><rect x="2" y="1" width="8" height="42" fill="#a30810"/><rect x="18" y="1" width="8" height="42" fill="#a30810"/><path d="M2 1 H10 L26 43 H18Z" fill="#e50914"/></svg>
<div class="b" style="left:1305px;top:1992px;width:83px;height:78px;background:#5e717a;border-radius:0;"></div>
<div class="b" style="left:1388px;top:1992px;width:8px;height:78px;background:#4a616c;border-radius:0;"></div>
<div class="b" style="left:1305px;top:2066px;width:91px;height:4px;background:#8fc8f0;border-radius:0;"></div>
<svg class="b" style="left:1327.500px;top:2007px" width="48.500" height="48.500" viewBox="0 0 48 48"><circle cx="24" cy="24" r="22" fill="#fff"/><path d="M24 2 A22 22 0 0 1 43.050 13 H24 A11 11 0 0 0 14.470 18.500 L4.950 13 A22 22 0 0 1 24 2Z" fill="#ea4335"/><path d="M43.050 13 A22 22 0 0 1 24 46 L33.530 29.500 A11 11 0 0 0 33.530 18.500 L24 13Z" fill="#fbbc04"/><path d="M24 46 A22 22 0 0 1 4.950 13 L14.470 29.500 A11 11 0 0 0 33.530 29.500Z" fill="#34a853"/><circle cx="24" cy="24" r="10" fill="#fff"/><circle cx="24" cy="24" r="8" fill="#4285f4"/></svg>
<div class="b" style="left:1405px;top:2066px;width:79px;height:4px;background:#8fc8f0;border-radius:0;"></div>
<svg class="b" style="left:1422px;top:2007px" width="58" height="52" viewBox="0 0 60 54"><circle cx="24" cy="25" r="22" fill="#1c1c22" stroke="#c8c8cc" stroke-width="2.500"/><g fill="none" stroke="#8a8a90" stroke-width="2.500"><circle cx="24" cy="15" r="7.500"/><circle cx="15" cy="31" r="7.500"/><circle cx="33" cy="31" r="7.500"/></g><circle cx="37" cy="36" r="12" fill="#f80808"/></svg>
<svg class="b" style="left:2853px;top:2004px" width="54" height="52" viewBox="0 0 54 52"><path d="M18 3 l3 8 9 -3 -4 8 8 5 -9 2 0 9 -7 -6 -8 4 3 -9 -8 -5 9 -2z" fill="#f3ae2c"/><circle cx="19" cy="19" r="8" fill="#f8c040"/><path d="M13 49 a10.500 10.500 0 0 1 -1.500 -20.900 a13 12.500 0 0 1 25 -1.500 a11 11 0 0 1 1.500 22.400 Z" fill="#b7d1f7"/><path d="M3.500 42 a10.500 10.500 0 0 0 9.500 7 h25 a11 11 0 0 0 10 -7 Z" fill="#9dbdee"/><circle cx="39.500" cy="14" r="11" fill="#d7302a"/><path d="M36.500 10.500 l4 -2.500 V21" stroke="#fff" stroke-width="2.800" fill="none"/></svg>
<div class="t " style="left:2917.5px;top:2018.7px;font-size:25.5px;font-weight:400;color:#eef0f3;letter-spacing:-0.995px;-webkit-text-stroke:0.8px;">25°C</div>
<div class="t " style="left:2990.0px;top:2017.9px;font-size:27px;font-weight:400;color:#eef0f3;letter-spacing:0.161px;-webkit-text-stroke:0.9px;">Mostly cloudy</div>
<svg class="b" style="left:3195.0px;top:2012.0px;" width="38" height="38" viewBox="0 0 24 24"><path d="M4.500 16 L12 8.500 L19.500 16" fill="none" stroke="#dfe6ee" stroke-width="2"/></svg>
<svg class="b" style="left:3247px;top:2014px" width="28" height="35" viewBox="0 0 36 42"><path d="M8 8 a10 6 0 0 1 20 0 M8 34 a10 6 0 0 0 20 0" fill="none" stroke="#fff" stroke-width="2.500"/><rect x="4" y="12" width="20" height="18" rx="3" fill="none" stroke="#fff" stroke-width="2.800"/><path d="M24 19 L32 14 V28 L24 23Z" fill="none" stroke="#fff" stroke-width="2.500"/><circle cx="14" cy="21" r="3" fill="#fff"/></svg>
<svg class="b" style="left:3294px;top:2018.500px" width="29" height="28" viewBox="0 0 38 38"><path d="M3 34 A30 30 0 0 1 34 4" fill="none" stroke="#b9c2cc" stroke-width="3.600"/><path d="M11 34 A22 22 0 0 1 34 12" fill="none" stroke="#b9c2cc" stroke-width="3.600"/><path d="M19 34 A14 14 0 0 1 34 20" fill="none" stroke="#b9c2cc" stroke-width="3.600"/><circle cx="30" cy="31" r="3.500" fill="#fff"/></svg>
<svg class="b" style="left:3334.500px;top:2014px" width="36" height="32" viewBox="0 0 40 38"><path d="M3 14 H9 L17 6 V32 L9 24 H3Z" fill="none" stroke="#fff" stroke-width="2.600" stroke-linejoin="round"/><path d="M22 14 a7 7 0 0 1 0 10 M26 10 a12 12 0 0 1 0 18 M30.500 6 a17 17 0 0 1 0 26" fill="none" stroke="#fff" stroke-width="2.400"/></svg>
<div class="t " style="left:3387.0px;top:2021.4px;font-size:22px;font-weight:400;color:#eef0f3;letter-spacing:-2.194px;-webkit-text-stroke:0.9px;">ENG</div>
<div class="t " style="left:3472.4px;top:2002.5px;font-size:22.5px;font-weight:400;color:#eef0f3;letter-spacing:-0.919px;-webkit-text-stroke:0.8px;">1:19 am</div>
<div class="t " style="left:3457.7px;top:2036.7px;font-size:22.5px;font-weight:400;color:#eef0f3;letter-spacing:-0.558px;-webkit-text-stroke:0.8px;">10/10/2025</div>
<svg class="b" style="left:3599px;top:2014.500px" width="36" height="36" viewBox="0 0 38 40"><path d="M3 3 H35 V28 H24 L19 34 L14 28 H3Z" fill="none" stroke="#fff" stroke-width="3" stroke-linejoin="round"/></svg>
<div class="b" style="left:3674.5px;top:1997px;width:2.5px;height:73px;background:#62788c;border-radius:0;"></div>
</div></body></html>
